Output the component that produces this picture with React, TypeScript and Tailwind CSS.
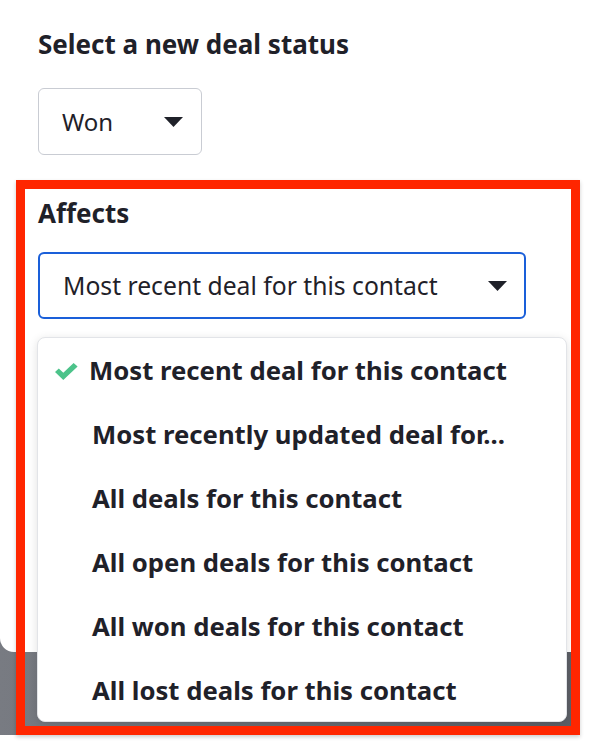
const options = [
  "Most recent deal for this contact",
  "Most recently updated deal for...",
  "All deals for this contact",
  "All open deals for this contact",
  "All won deals for this contact",
  "All lost deals for this contact",
];

const Caret = () => (
  <svg width="19" height="10" viewBox="0 0 19 10" className="shrink-0">
    <path d="M0 0 L19 0 L9.5 10 Z" fill="#1f2129" />
  </svg>
);

const CheckMark = () => (
  <svg width="23" height="17" viewBox="0 0 23 17">
    <path
      d="M0 9 L3.8 5.4 L8.3 9.8 L18.6 0 L22.6 3.6 L8.3 17 Z"
      fill="#4cc38a"
    />
  </svg>
);

const App = () => {
  return (
    <div className="relative h-[747px] w-[589px] overflow-hidden bg-white font-['Noto_Sans',sans-serif] text-[#1f2129]">
      <div className="w-[580px] bg-gradient-to-r from-[#787b82] to-[#5c5f66]">
        {/* Modal body */}
        <div className="h-[652px] rounded-bl-[14px] bg-white pl-[38px] pt-[27px]">
          <h2 className="text-[26px] font-bold leading-[34px]">
            Select a new deal status
          </h2>

          <div className="mt-[27px] flex h-[67px] w-[164px] items-center justify-between rounded-[6px] border border-[#c9ccd3] pl-[23px] pr-[18px] text-[24px]">
            <span>Won</span>
            <Caret />
          </div>

          <h3 className="mt-[41px] text-[26px] font-bold leading-[34px]">
            Affects
          </h3>

          <div className="mt-[22px] flex h-[67px] w-[488px] items-center justify-between rounded-[6px] border-2 border-[#1a5fd9] pl-[23px] pr-[17px] text-[24.7px]">
            <span>Most recent deal for this contact</span>
            <Caret />
          </div>
        </div>
        <div className="h-[83px]" />
      </div>

      {/* Open dropdown menu */}
      <div className="absolute left-[37px] top-[337px] h-[385px] w-[530px] rounded-[8px] border border-[#e2e4e8] bg-white pt-px shadow-[0_2px_10px_rgba(0,0,0,0.12)]">
        {options.map((o, i) => (
          <div
            key={o}
            className="flex h-[64px] items-center text-[25.7px] font-bold"
          >
            {i === 0 ? (
              <span className="flex w-[51px] justify-end pr-[11px]">
                <CheckMark />
              </span>
            ) : (
              <span className="w-[54px]" />
            )}
            <span>{o}</span>
          </div>
        ))}
      </div>

      {/* Annotation frame */}
      <div className="pointer-events-none absolute left-[16px] top-[180px] h-[555px] w-[564px] border-[9px] border-[#ff2600] shadow-[0_2px_4px_rgba(0,0,0,0.2)]" />
    </div>
  );
};

export default App;
